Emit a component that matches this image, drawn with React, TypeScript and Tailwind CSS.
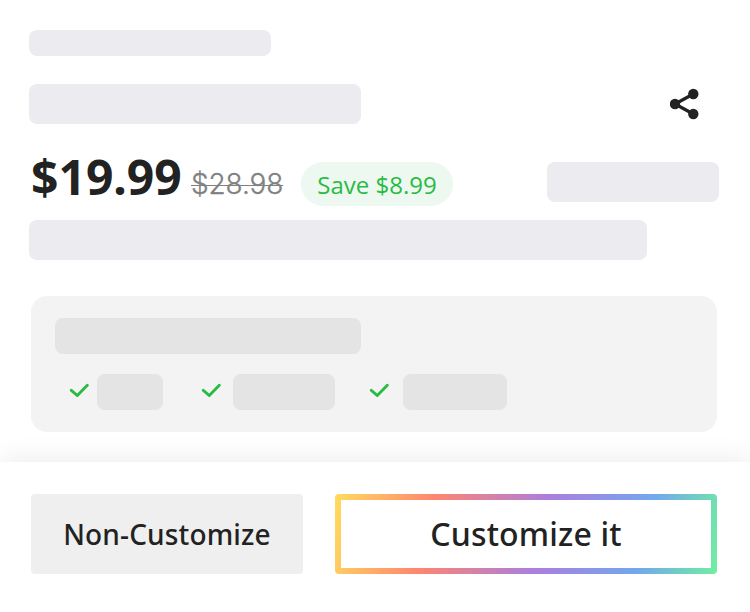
function Placeholder({ className }: { className: string }) {
  return <div className={`rounded-lg ${className}`} />;
}

function CheckIcon({ className }: { className: string }) {
  return (
    <svg viewBox="0 0 20 14" className={`-mt-[5px] h-3.5 w-5 shrink-0 ${className}`} fill="none">
      <path
        d="M2.3 7.3 8.3 12.5 18.3 2.3"
        stroke="#2abb45"
        strokeWidth="2.9"
        strokeLinecap="round"
      />
    </svg>
  );
}

function ShareIcon() {
  return (
    <svg viewBox="0 0 30 32" className="h-8 w-[30px]" fill="#222222">
      <path d="M23.3 6 5 16l18.3 10" fill="none" stroke="#222222" strokeWidth="3.3" />
      <circle cx="23.3" cy="6" r="5.2" />
      <circle cx="5" cy="16" r="5.2" />
      <circle cx="23.3" cy="26" r="5.2" />
    </svg>
  );
}

export default function App() {
  return (
    <div className="flex h-[612px] w-[750px] flex-col overflow-hidden bg-white font-['Noto_Sans','Open_Sans',sans-serif] text-[#222222]">
      <div className="flex h-[462px] flex-col pt-[30px] pl-[29px]">
        <Placeholder className="h-[26px] w-[242px] bg-[#ebebf0]" />
        <div className="mt-7 flex h-10 justify-between pr-[50px]">
          <Placeholder className="h-10 w-[332px] bg-[#ebebf0]" />
          <div className="mt-1">
            <ShareIcon />
          </div>
        </div>

        {/* Price row */}
        <div className="mt-[29px] flex h-[59px] items-start whitespace-nowrap">
          <span className="ml-0.5 w-[160px] text-[48px] leading-[48px] font-bold">$19.99</span>
          <span className="mt-[13px] w-[110px] font-['Inter',sans-serif] text-[28px] leading-[36px] font-light tracking-[-0.15px] text-[#808080] line-through decoration-1 [-webkit-text-stroke:0.3px_#808080]">
            $28.98
          </span>
          <div className="mt-[9px] flex h-11 w-[152px] items-center justify-center rounded-full bg-[#edf8f0] pt-0.5 font-['Open_Sans',sans-serif] text-[24px] text-[#2abb45]">
            Save $8.99
          </div>
          <Placeholder className="mt-[9px] ml-[94px] h-10 w-[172px] bg-[#ebebf0]" />
        </div>
        <Placeholder className="mt-2 h-10 w-[618px] bg-[#ebebf0]" />

        {/* Feature summary */}
        <div className="mt-9 ml-0.5 h-[136px] w-[686px] rounded-2xl bg-[#f3f3f3] px-6 pt-[22px]">
          <Placeholder className="h-9 w-[306px] bg-[#e4e4e4]" />
          <div className="mt-5 flex items-center">
            <CheckIcon className="ml-3.5" />
            <Placeholder className="ml-2 h-9 w-[66px] bg-[#e4e4e4]" />
            <CheckIcon className="ml-[38px]" />
            <Placeholder className="ml-3 h-9 w-[102px] bg-[#e4e4e4]" />
            <CheckIcon className="ml-[34px]" />
            <Placeholder className="ml-3.5 h-9 w-[104px] bg-[#e4e4e4]" />
          </div>
        </div>
      </div>

      {/* Bottom action bar */}
      <div className="flex h-[150px] gap-8 bg-white px-[31px] pt-8 shadow-[0_-4px_24px_rgba(0,0,0,0.07)]">
        <button className="h-20 w-[272px] rounded-sm bg-[#efefef] text-[28px] font-medium tracking-[0.15px]">
          Non-Customize
        </button>
        <div className="h-20 w-[382px] rounded-sm bg-[linear-gradient(103deg,#ffdc5c_0%,#ff8570_25%,#aa7edf_54%,#72a8ed_80%,#70efa0_100%)] p-1.5">
          <button className="h-full w-full bg-white text-[32px] font-medium tracking-[0.15px]">
            Customize it
          </button>
        </div>
      </div>
    </div>
  );
}
